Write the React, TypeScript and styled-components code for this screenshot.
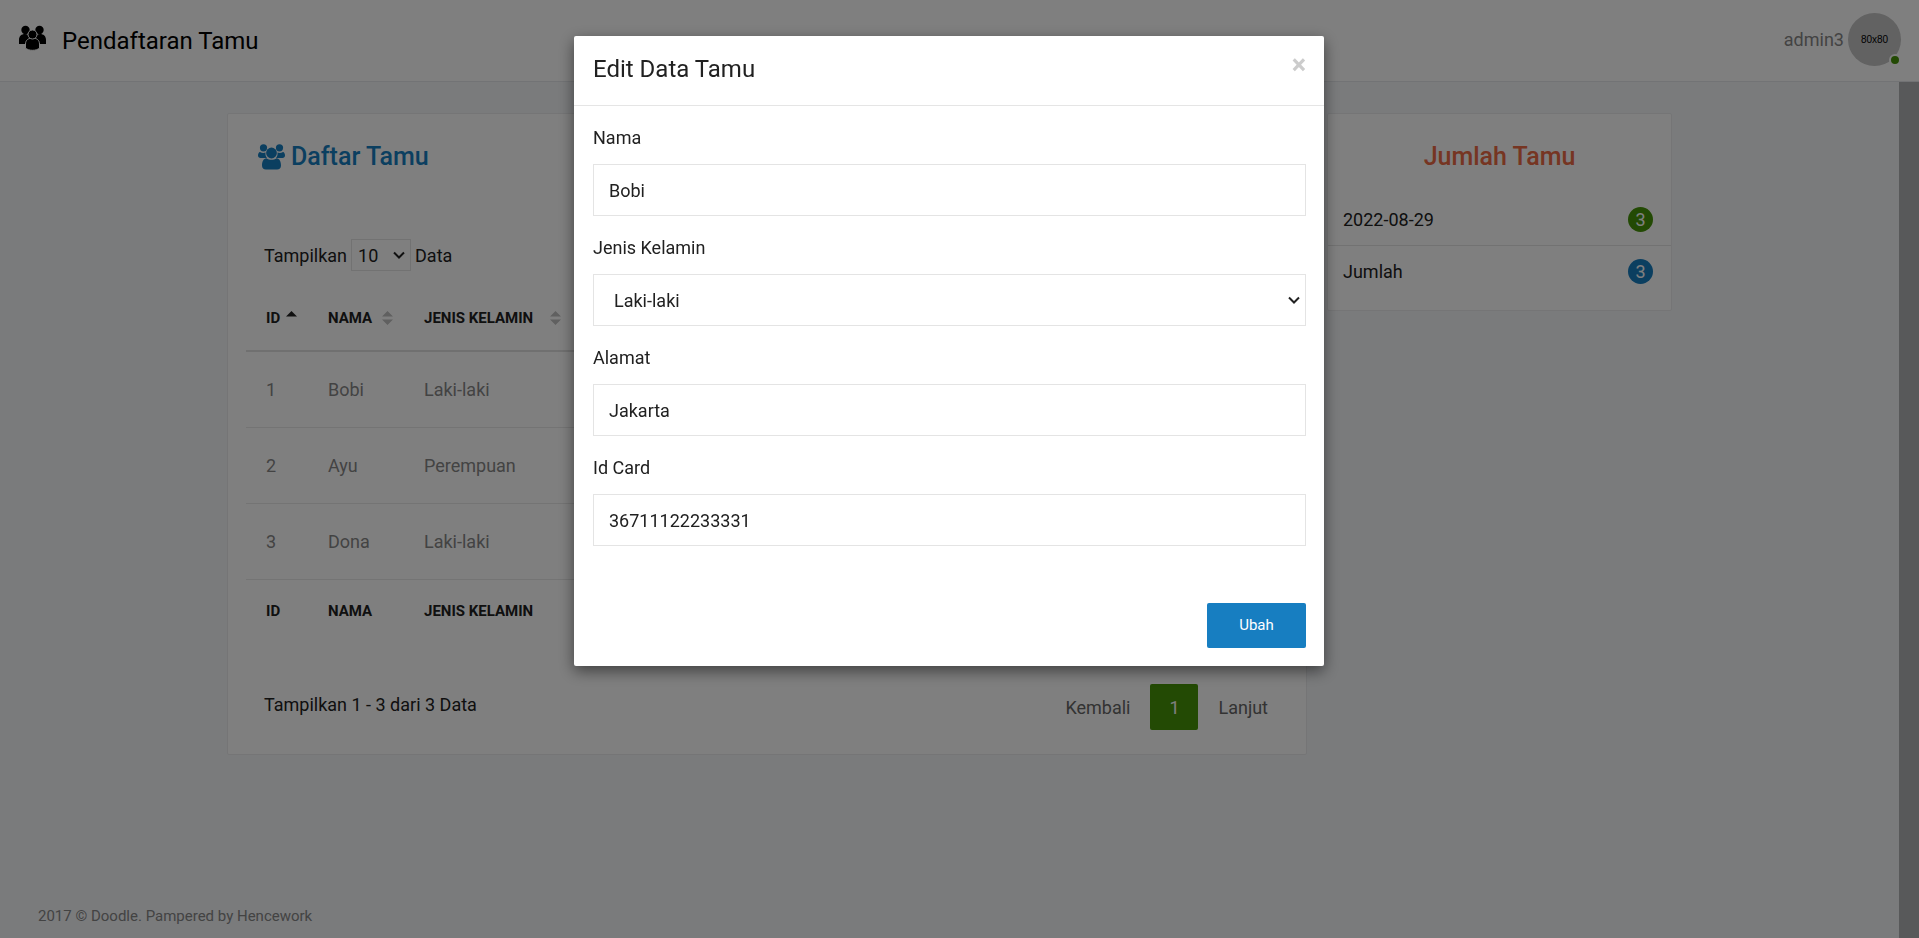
import React from "react";
import styled, { createGlobalStyle } from "styled-components";

const GlobalStyle = createGlobalStyle`
  *, *::before, *::after { box-sizing: border-box; }
  body { margin: 0; background: #f4f6f9; color: #212121; font: 400 18px/25px Roboto, sans-serif; }
  button, input, select { font: inherit; color: inherit; }
  h1, h2, h3, h4, p, ul { margin: 0; padding: 0; }
`;

const Page = styled.div`
  min-height: 100vh;
  display: flex;
  flex-direction: column;
`;

const Navbar = styled.header`
  height: 82px;
  flex: none;
  display: flex;
  align-items: center;
  justify-content: space-between;
  padding: 0 18px 0 19px;
  background: #fff;
  border-bottom: 1px solid #e4e7eb;
`;

const Brand = styled.a`
  display: flex;
  align-items: center;
  gap: 16px;
  color: #000;
  font-size: 24px;
  line-height: 32px;
  text-decoration: none;
  svg { margin-bottom: 6px; }
`;

const UserButton = styled.button`
  display: flex;
  align-items: center;
  gap: 4px;
  border: 0;
  padding: 0 0 2px;
  background: none;
  color: #878787;
`;

const Avatar = styled.span`
  position: relative;
  display: grid;
  place-items: center;
  width: 53px;
  height: 53px;
  border-radius: 50%;
  background: #c4c4c4;
  color: #000;
  font: 10px/12px "Liberation Sans", sans-serif;
`;

const Online = styled.span`
  position: absolute;
  right: 0;
  bottom: 0;
  width: 12px;
  height: 12px;
  border: 2px solid #fff;
  border-radius: 50%;
  background: #469408;
`;

const Body = styled.div`
  flex: 1;
  display: flex;
`;

const Content = styled.div`
  flex: 1;
  display: flex;
  flex-direction: column;
`;

const SideRail = styled.div`
  flex: none;
  width: 20px;
  background: #b0b2b5;
`;

const Columns = styled.main`
  flex: 1;
  display: grid;
  grid-template-columns: 1080fr 345fr;
  gap: 20px;
  align-items: start;
  width: 100%;
  max-width: 1445px;
  margin: 0 auto;
  padding-top: 31px;
`;

const Card = styled.section`
  background: #fff;
  border: 1px solid #eaebed;
  border-radius: 2px;
`;

const CardTitle = styled.h2<{ $tone: string; $center?: boolean }>`
  display: flex;
  align-items: center;
  justify-content: ${(p) => (p.$center ? "center" : "flex-start")};
  gap: 6px;
  padding: 27px 30px 20px;
  color: ${(p) => p.$tone};
  font-size: 25px;
  font-weight: 500;
  line-height: 32px;
`;

const GuestArea = styled.div`
  padding: 46px 18px 24px;
`;

const LengthLabel = styled.label`
  display: flex;
  align-items: center;
  gap: 4px;
  height: 32px;
  padding-left: 18px;
`;

const Select = styled.select`
  appearance: none;
  border: 1px solid #e4e4e4;
  border-radius: 0;
  background: #fff
    url("data:image/svg+xml,%3Csvg xmlns='http://www.w3.org/2000/svg' width='12' height='8' viewBox='0 0 12 8'%3E%3Cpath d='M1 1.500l5 5 5-5' fill='none' stroke='%23212121' stroke-width='2'/%3E%3C/svg%3E")
    no-repeat right 5px center;
`;

const LengthSelect = styled(Select)`
  width: 60px;
  height: 32px;
  padding: 0 6px;
`;

const Table = styled.table`
  width: 100%;
  margin-top: 13px;
  border-collapse: collapse;
  table-layout: fixed;
  text-align: left;
`;

const HeadCell = styled.th<{ $width?: number; $foot?: boolean }>`
  width: ${(p) => (p.$width ? p.$width + "px" : "auto")};
  height: ${(p) => (p.$foot ? 61 : 67)}px;
  padding: 2px 0 0 20px;
  border-bottom: ${(p) => (p.$foot ? "0" : "2px solid #e0e0e0")};
  font-size: 15px;
  font-weight: 700;
  line-height: 20px;
  white-space: nowrap;
`;

const HeadLabel = styled.div<{ $spread?: boolean }>`
  display: flex;
  align-items: center;
  justify-content: ${(p) => (p.$spread ? "space-between" : "flex-start")};
  gap: ${(p) => (p.$spread ? 0 : 6)}px;
`;

const Cell = styled.td`
  height: 76px;
  padding: 0 0 0 20px;
  border-bottom: 1px solid #e8e8e8;
  color: #878787;
`;

const TableFooter = styled.div`
  display: flex;
  align-items: flex-start;
  justify-content: space-between;
  margin-top: 44px;
  padding-left: 18px;
`;

const Summary = styled.p`
  padding-top: 8px;
`;

const Pager = styled.nav`
  display: flex;
`;

const PageButton = styled.button<{ $active?: boolean }>`
  height: 46px;
  min-width: 48px;
  padding: 0 ${(p) => (p.$active ? 18 : 20)}px;
  border: 0;
  border-radius: 2px;
  background: ${(p) => (p.$active ? "#469408" : "transparent")};
  color: ${(p) => (p.$active ? "#fff" : "#666")};
`;

const CountList = styled.ul`
  padding: 0 0 13px;
  list-style: none;
`;

const CountRow = styled.li`
  display: flex;
  align-items: center;
  justify-content: space-between;
  height: 52px;
  padding: 0 18px 0 15px;
  & + & { border-top: 1px solid #e4e4e4; }
`;

const Badge = styled.span<{ $tone: string }>`
  width: 25px;
  height: 25px;
  border-radius: 50%;
  background: ${(p) => p.$tone};
  color: #fff;
  text-align: center;
`;

const Footer = styled.footer`
  padding: 0 38px 12px;
  color: #878787;
  font-size: 15px;
  line-height: 20px;
`;

const Overlay = styled.div`
  position: fixed;
  inset: 0;
  display: flex;
  align-items: flex-start;
  justify-content: center;
  padding: 36px 21px 0 0;
  background: rgba(0, 0, 0, 0.5);
`;

const Dialog = styled.div`
  width: 750px;
  background: #fff;
  border-radius: 2px;
  box-shadow: 0 5px 15px rgba(0, 0, 0, 0.5);
`;

const DialogHeader = styled.div`
  display: flex;
  justify-content: space-between;
  align-items: flex-start;
  padding: 17px 18px 20px 19px;
  border-bottom: 1px solid #e5e5e5;
`;

const DialogTitle = styled.h3`
  font-size: 24px;
  font-weight: 400;
  line-height: 32px;
`;

const CloseButton = styled.button`
  padding: 0;
  border: 0;
  background: none;
  color: #ccc;
  font-size: 27px;
  font-weight: 700;
  line-height: 24px;
`;

const DialogForm = styled.form`
  padding: 19px 18px 18px 19px;
`;

const Field = styled.div`
  display: flex;
  flex-direction: column;
  gap: 14px;
  margin-bottom: 19px;
`;

const TextInput = styled.input`
  width: 100%;
  height: 52px;
  padding: 0 15px;
  border: 1px solid #e4e4e4;
  background: #fff;
`;

const SelectInput = styled(Select)`
  width: 100%;
  height: 52px;
  padding: 0 20px;
`;

const Actions = styled.div`
  display: flex;
  justify-content: flex-end;
  padding-top: 38px;
`;

const SubmitButton = styled.button`
  width: 99px;
  height: 45px;
  border: 0;
  border-radius: 2px;
  background: #177ec1;
  color: #fff;
  font-size: 15px;
`;

const BrandIcon = () => (
  <svg width="27" height="26" viewBox="0 0 27 26" aria-hidden="true">
    <g fill="#000">
      <circle cx="6.5" cy="5" r="4.2" />
      <circle cx="20.5" cy="5" r="4.2" />
      <path d="M0 19v-4c0-4 2.500-6 6-6 2 0 4 1 4.500 3v7zM27 19v-4c0-4-2.500-6-6-6-2 0-4 1-4.500 3v7z" />
    </g>
    <g fill="#000" stroke="#fff" strokeWidth="1">
      <path d="M6.500 23v-4c0-4 3-6 7-6s7 2 7 6v4c-1.500 1.500-4 2.300-7 2.300s-5.500-.800-7-2.300z" />
      <circle cx="13.500" cy="9.500" r="4.500" />
    </g>
  </svg>
);

const GroupIcon = () => (
  <svg width="27" height="26" viewBox="0 0 27 26" fill="currentColor" aria-hidden="true">
    <circle cx="5.500" cy="3.800" r="3.600" />
    <circle cx="21.500" cy="3.800" r="3.600" />
    <circle cx="13.500" cy="9" r="5.400" />
    <path d="M2 8c2 1.200 4 1.200 5.500.5-.3 2 .2 4 1.500 5.500H2.500C1 14 0 13 0 11.500 0 10 .8 8 2 8zM25 8c-2 1.200-4 1.200-5.500.5.3 2-.2 4-1.500 5.500h6.500c1.500 0 2.500-1 2.500-2.500C27 10 26.200 8 25 8z" />
    <path d="M8.500 14.200c3 2 7 2 10 0 3 .3 4.500 3 4.500 7.300 0 2.500-1.500 4-4 4H8c-2.500 0-4-1.500-4-4 0-4.300 1.500-7 4.500-7.300z" />
  </svg>
);

const SortUp = () => (
  <svg width="11" height="16" viewBox="0 0 11 16" aria-hidden="true">
    <path d="M5.500 1 11 6.500H0z" fill="#212121" />
  </svg>
);

const SortBoth = () => (
  <svg width="11" height="16" viewBox="0 0 11 16" aria-hidden="true">
    <path d="M5.500 1 11 6.500H0zM5.500 15 0 9.500h11z" fill="#c0c0c0" />
  </svg>
);

const guests = [
  { id: 1, name: "Bobi", gender: "Laki-laki" },
  { id: 2, name: "Ayu", gender: "Perempuan" },
  { id: 3, name: "Dona", gender: "Laki-laki" },
];

export default function App() {
  return (
    <>
      <GlobalStyle />
      <Page>
        <Navbar>
          <Brand href="#">
            <BrandIcon />
            Pendaftaran Tamu
          </Brand>
          <UserButton type="button">
            admin3
            <Avatar>
              80x80
              <Online />
            </Avatar>
          </UserButton>
        </Navbar>
        <Body>
          <Content>
            <Columns>
              <Card>
                <CardTitle $tone="#177ec1">
                  <GroupIcon />
                  Daftar Tamu
                </CardTitle>
                <GuestArea>
                  <LengthLabel>
                    Tampilkan
                    <LengthSelect defaultValue="10">
                      <option>10</option>
                    </LengthSelect>
                    Data
                  </LengthLabel>
                  <Table>
                    <thead>
                      <tr>
                        <HeadCell scope="col" $width={62}>
                          <HeadLabel>ID <SortUp /></HeadLabel>
                        </HeadCell>
                        <HeadCell scope="col" $width={85}>
                          <HeadLabel $spread>NAMA <SortBoth /></HeadLabel>
                        </HeadCell>
                        <HeadCell scope="col" $width={168}>
                          <HeadLabel $spread>
                            <Indented>JENIS KELAMIN</Indented> <SortBoth />
                          </HeadLabel>
                        </HeadCell>
                        <HeadCell as="td" />
                      </tr>
                    </thead>
                    <tbody>
                      {guests.map((g) => (
                        <tr key={g.id}>
                          <Cell>{g.id}</Cell>
                          <Cell>{g.name}</Cell>
                          <Cell><Indented>{g.gender}</Indented></Cell>
                          <Cell />
                        </tr>
                      ))}
                    </tbody>
                    <tfoot>
                      <tr>
                        <HeadCell $foot>ID</HeadCell>
                        <HeadCell $foot>NAMA</HeadCell>
                        <HeadCell $foot><Indented>JENIS KELAMIN</Indented></HeadCell>
                        <HeadCell as="td" $foot />
                      </tr>
                    </tfoot>
                  </Table>
                  <TableFooter>
                    <Summary>Tampilkan 1 - 3 dari 3 Data</Summary>
                    <Pager>
                      <PageButton type="button">Kembali</PageButton>
                      <PageButton type="button" $active>1</PageButton>
                      <PageButton type="button">Lanjut</PageButton>
                    </Pager>
                  </TableFooter>
                </GuestArea>
              </Card>
              <Card>
                <CardTitle $tone="#ec6a45" $center>Jumlah Tamu</CardTitle>
                <CountList>
                  <CountRow>
                    2022-08-29 <Badge $tone="#469408">3</Badge>
                  </CountRow>
                  <CountRow>
                    Jumlah <Badge $tone="#177ec1">3</Badge>
                  </CountRow>
                </CountList>
              </Card>
            </Columns>
            <Footer>2017 © Doodle. Pampered by Hencework</Footer>
          </Content>
          <SideRail />
        </Body>
      </Page>
      <Overlay>
        <Dialog role="dialog" aria-modal="true" aria-labelledby="dialog-title">
          <DialogHeader>
            <DialogTitle id="dialog-title">Edit Data Tamu</DialogTitle>
            <CloseButton type="button">×</CloseButton>
          </DialogHeader>
          <DialogForm onSubmit={(e) => e.preventDefault()}>
            <Field>
              <label htmlFor="nama">Nama</label>
              <TextInput id="nama" defaultValue="Bobi" />
            </Field>
            <Field>
              <label htmlFor="gender">Jenis Kelamin</label>
              <SelectInput id="gender" defaultValue="Laki-laki">
                <option>Laki-laki</option>
              </SelectInput>
            </Field>
            <Field>
              <label htmlFor="alamat">Alamat</label>
              <TextInput id="alamat" defaultValue="Jakarta" />
            </Field>
            <Field>
              <label htmlFor="idcard">Id Card</label>
              <TextInput id="idcard" defaultValue="36711122233331" />
            </Field>
            <Actions>
              <SubmitButton type="submit">Ubah</SubmitButton>
            </Actions>
          </DialogForm>
        </Dialog>
      </Overlay>
    </>
  );
}

const Indented = styled.span`
  padding-left: 11px;
`;
